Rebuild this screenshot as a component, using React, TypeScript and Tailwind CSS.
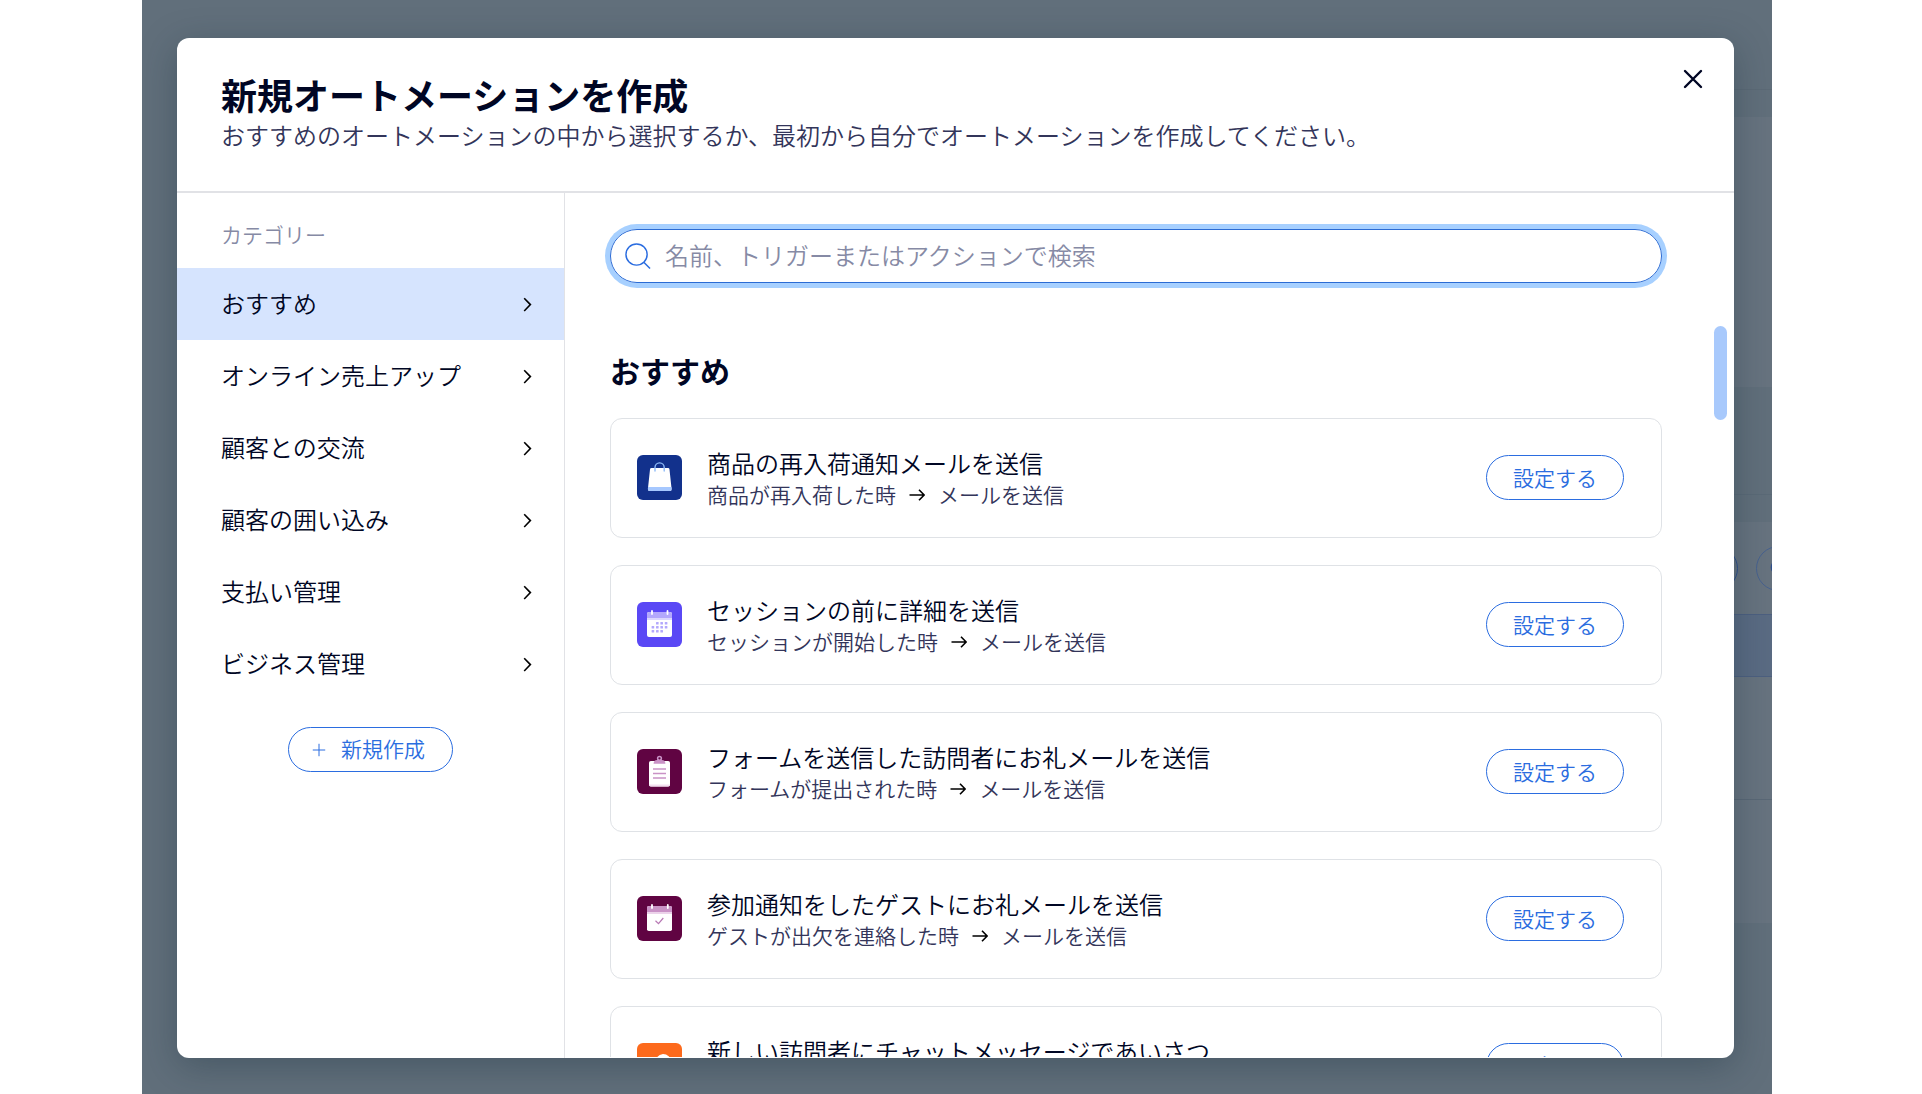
import { useState } from 'react';
import type { ReactNode } from 'react';
import { Plus, Search } from 'lucide-react';

const categories = [
  'おすすめ',
  'オンライン売上アップ',
  '顧客との交流',
  '顧客の囲い込み',
  '支払い管理',
  'ビジネス管理',
];

const BagIcon = () => (
  <svg viewBox="0 0 45 45" className="w-full h-full" aria-hidden="true">
    <path d="M14.5 13h16.5a1.5 1.5 0 0 1 1.5 1.4L34.6 34a1.8 1.8 0 0 1-1.8 2H12.7a1.8 1.8 0 0 1-1.8-2L13 14.4a1.5 1.5 0 0 1 1.5-1.4z" fill="#fff" />
    <path d="M11.1 32h23.3l.2 2a1.8 1.8 0 0 1-1.8 2H12.7a1.8 1.8 0 0 1-1.8-2z" fill="#a6c8ff" />
    <path d="M18 16v-3.5a4.6 4.6 0 0 1 9.2 0V16" fill="none" stroke="#8fbcf8" strokeWidth="1.4" strokeLinecap="round" />
  </svg>
);

const calendarDots = [
  [19, 21], [23.4, 21], [27.8, 21],
  [14.6, 25], [19, 25], [23.4, 25], [27.8, 25],
  [14.6, 29], [19, 29], [23.4, 29],
];

const CalendarIcon = () => (
  <svg viewBox="0 0 45 45" className="w-full h-full" aria-hidden="true">
    <rect x="10" y="10" width="25" height="25" rx="2" fill="#fff" />
    <path d="M12 10h21a2 2 0 0 1 2 2v4H10v-4a2 2 0 0 1 2-2z" fill="#b3a8fc" />
    <path d="M10 16h25v2H10z" fill="#dcd7ff" />
    <path d="M15 9v3M30.5 9v3" stroke="#fff" strokeWidth="1.8" strokeLinecap="round" />
    {calendarDots.map(([x, y]) => (
      <rect key={`${x}-${y}`} x={x} y={y - 1} width="2.6" height="2.6" rx="0.5" fill="#b3a8fc" />
    ))}
  </svg>
);

const ClipboardIcon = () => (
  <svg viewBox="0 0 45 45" className="w-full h-full" aria-hidden="true">
    <rect x="12" y="12" width="21" height="25.5" rx="1.8" fill="#fff" />
    <path d="M12 35.5h21v.2a1.8 1.8 0 0 1-1.800 1.800H13.800a1.800 1.800 0 0 1-1.800-1.800z" fill="#f3dff0" />
    <circle cx="22.5" cy="9.300" r="1.900" fill="none" stroke="#c992c6" strokeWidth="1.500" />
    <path d="M20 11h5c1.800 0 3.400 1 3.400 3.700H16.600C16.600 12 18.200 11 20 11z" fill="#c992c6" />
    <path d="M16 20h13M16 24.500h13M16 29h13" stroke="#c992c6" strokeWidth="1.300" />
  </svg>
);

const RsvpIcon = () => (
  <svg viewBox="0 0 45 45" className="w-full h-full" aria-hidden="true">
    <rect x="10" y="10" width="25" height="25" rx="1.8" fill="#fff" />
    <path d="M11.8 10h21.400a1.800 1.800 0 0 1 1.800 1.800V16H10v-4.200a1.800 1.800 0 0 1 1.800-1.800z" fill="#c992c6" />
    <path d="M10 16h25v2H10z" fill="#ecd3ea" />
    <path d="M15 9v3M30.800 9v3" stroke="#fff" strokeWidth="1.800" strokeLinecap="round" />
    <path d="M18.500 24.800l3 2.800 4.800-5.600" fill="none" stroke="#b777b3" strokeWidth="1.200" />
  </svg>
);

const ChatIcon = () => (
  <svg viewBox="0 0 45 45" className="w-full h-full" aria-hidden="true">
    <path d="M26 11a8 8 0 0 1 8 8c0 4.500-3.500 8-8 8h-7l1-3.500A8 8 0 0 1 26 11z" fill="#fff" />
    <path d="M17 19a7 7 0 1 0 0 14h7l-1.500-3" fill="#ffd0b5" />
  </svg>
);

const ChevronIcon = () => (
  <svg viewBox="0 0 9 18" className="w-[9px] h-[18px]" fill="none" stroke="#000" strokeWidth="1.6" aria-hidden="true">
    <path d="M1.200 3.200L7.400 9.600l-6.200 6.400" />
  </svg>
);

const ArrowIcon = () => (
  <svg viewBox="0 0 16 16" className="size-4" fill="none" stroke="#000" strokeWidth="1.6" aria-hidden="true">
    <path d="M.5 9h14.500M10 3.800L15.100 9 10 14.200" />
  </svg>
);

type Automation = {
  title: string;
  trigger?: string;
  action?: string;
  tile: string;
  icon: ReactNode;
};

const automations: Automation[] = [
  {
    title: '商品の再入荷通知メールを送信',
    trigger: '商品が再入荷した時',
    action: 'メールを送信',
    tile: 'bg-[#12318c]',
    icon: <BagIcon />,
  },
  {
    title: 'セッションの前に詳細を送信',
    trigger: 'セッションが開始した時',
    action: 'メールを送信',
    tile: 'bg-[#5a48f5]',
    icon: <CalendarIcon />,
  },
  {
    title: 'フォームを送信した訪問者にお礼メールを送信',
    trigger: 'フォームが提出された時',
    action: 'メールを送信',
    tile: 'bg-[#600442]',
    icon: <ClipboardIcon />,
  },
  {
    title: '参加通知をしたゲストにお礼メールを送信',
    trigger: 'ゲストが出欠を連絡した時',
    action: 'メールを送信',
    tile: 'bg-[#600442]',
    icon: <RsvpIcon />,
  },
  {
    title: '新しい訪問者にチャットメッセージであいさつ',
    tile: 'bg-[#fd6a1c]',
    icon: <ChatIcon />,
  },
];

// The dimmed dashboard behind the dialog
function Backdrop() {
  return (
    <div className="absolute inset-0 flex justify-end overflow-hidden" aria-hidden="true">
      <div className="w-1/2">
        <div className="h-[90px] border-b border-[#5c6a76]"></div>
        <div className="h-[27px]"></div>
        <div className="h-[270px] bg-[#67737f]"></div>
        <div className="h-[108px] border-b border-[#5b6a77]"></div>
        <div className="h-[27px]"></div>
        <div className="h-[92px] bg-[#67737f] flex justify-end items-center gap-[18px] -mr-[29px]">
          <div className="size-[45px] rounded-full border border-[#2f4f8c]"></div>
          <div className="size-[45px] rounded-full border border-[#48628f] flex items-center justify-center">
            <Search className="size-5 text-[#2f4f8c]" strokeWidth={2} />
          </div>
        </div>
        <div className="h-[63px] bg-[#5a6b83] border-y border-[#4d6080]"></div>
        <div className="h-[123px] bg-[#67737f] border-b border-[#5a6876]"></div>
        <div className="h-[123px] bg-[#67737f]"></div>
      </div>
    </div>
  );
}

export default function App() {
  const [active, setActive] = useState(categories[0]);
  const [query, setQuery] = useState('');

  return (
    <div className="h-screen bg-white pl-[142px] pr-[150px] font-['Noto_Sans_CJK_JP',sans-serif] font-[350] text-[#000624]">
      <div className="relative h-full bg-[#616f7b] pt-[38px] pb-9 pl-[35px] pr-[38px] overflow-hidden">
        <Backdrop />

        <div
          role="dialog"
          aria-labelledby="dialog-title"
          className="relative h-full bg-white rounded-xl overflow-hidden flex flex-col shadow-[0_9px_36px_rgba(22,45,61,0.35)]"
        >
          {/* Header */}
          <header className="flex justify-between items-start pl-11 pr-[23px] pt-[34px] pb-[38px] border-b-2 border-[#e1e2e6]">
            <div>
              <h1 id="dialog-title" className="text-4xl leading-[45px] font-bold">
                新規オートメーションを作成
              </h1>
              <p className="text-2xl leading-9 text-[#33355a]">
                おすすめのオートメーションの中から選択するか、最初から自分でオートメーションを作成してください。
              </p>
            </div>
            <button type="button" aria-label="閉じる" className="-mt-[11px]">
              <svg viewBox="0 0 36 36" className="size-9" fill="none" stroke="#000624" strokeWidth="2.4" strokeLinecap="round" aria-hidden="true">
                <path d="M10 10l16 16M26 10L10 26" />
              </svg>
            </button>
          </header>

          <div className="flex flex-1 min-h-0">
            {/* Categories */}
            <nav className="w-[388px] shrink-0 border-r border-[#e1e2e6]">
              <h2 className="px-11 pt-[26px] pb-[19px] text-[21px] leading-[30px] text-[#868aa5]">カテゴリー</h2>
              <ul>
                {categories.map((category) => (
                  <li key={category}>
                    <button
                      type="button"
                      onClick={() => setActive(category)}
                      className={`w-full h-[72px] pl-11 pr-8 flex items-center justify-between text-2xl ${
                        active === category ? 'bg-[#d6e4fe]' : ''
                      }`}
                    >
                      <span className="pb-0.5">{category}</span>
                      <ChevronIcon />
                    </button>
                  </li>
                ))}
              </ul>
              <div className="flex justify-center mt-[27px]">
                <button
                  type="button"
                  className="h-[45px] pl-5 pr-[27px] flex items-center gap-3 rounded-full border border-[#2b6de0] text-[21px] text-[#2b6de0]"
                >
                  <Plus className="size-5" strokeWidth={1.2} />
                  <span className="pb-0.5">新規作成</span>
                </button>
              </div>
            </nav>

            {/* Automation list */}
            <main className="flex-1 min-w-0 flex flex-col pl-[45px] pt-9 pb-px">
              <label className="h-[54px] mr-[72px] shrink-0 flex items-center gap-3.5 px-3.5 rounded-full border border-[#2b6bd4] ring-[5px] ring-[#a7d0ff]">
                <svg viewBox="0 0 27 27" className="w-[26px] h-[26px] shrink-0" fill="none" stroke="#2b6de0" strokeWidth="1.5" aria-hidden="true">
                  <circle cx="12" cy="12" r="11" />
                  <path d="M19.500 20l6.500 6.500" />
                </svg>
                <input
                  type="text"
                  aria-label="検索"
                  value={query}
                  onChange={(e) => setQuery(e.target.value)}
                  placeholder="名前、トリガーまたはアクションで検索"
                  className="flex-1 min-w-0 pb-0.5 text-2xl bg-transparent outline-none placeholder:text-[#868aa5]"
                />
              </label>

              <div className="flex flex-1 min-h-0 mt-9">
                <div className="flex-1 min-w-0 overflow-y-auto [scrollbar-width:none]">
                  <h2 className="pt-[34px] pb-[30px] text-[30px] leading-[35px] font-bold">{active}</h2>
                  <div className="flex flex-col gap-[27px]">
                    {automations.map((item) => (
                      <article
                        key={item.title}
                        className="h-[120px] shrink-0 flex items-start pt-9 pl-[26px] pr-[37px] rounded-xl border border-[#dfe2e6]"
                      >
                        <div className={`size-[45px] shrink-0 rounded-md ${item.tile}`}>{item.icon}</div>
                        <div className="ml-[25px] -mt-2 flex-1">
                          <h3 className="text-2xl leading-8">{item.title}</h3>
                          {item.trigger && (
                            <p className="flex items-center gap-[13px] text-[21px] leading-[30px] text-[#33355a]">
                              {item.trigger}
                              <ArrowIcon />
                              {item.action}
                            </p>
                          )}
                        </div>
                        <button
                          type="button"
                          className="w-[138px] h-[45px] rounded-full border border-[#2b6de0] text-[21px] text-[#2b6de0]"
                        >
                          設定する
                        </button>
                      </article>
                    ))}
                  </div>
                </div>
                <div className="w-[72px] shrink-0 flex justify-end pt-[7px] pr-[7px]">
                  <div className="w-[13px] h-[94px] rounded-full bg-[#a8c9fc]"></div>
                </div>
              </div>
            </main>
          </div>
        </div>
      </div>
    </div>
  );
}
